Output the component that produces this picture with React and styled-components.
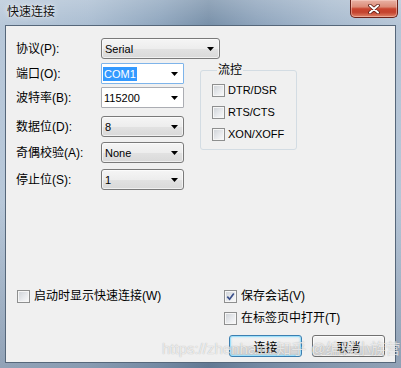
import React from "react";
import styled, { createGlobalStyle } from "styled-components";

const Global = createGlobalStyle`
  html, body { margin: 0; padding: 0; background: #fff; }
  body {
    width: 401px; height: 368px; overflow: hidden;
    font-family: "Liberation Sans", "Noto Sans CJK SC", sans-serif;
  }
  * { box-sizing: border-box; }
`;

const Window = styled.div`
  position: relative;
  width: 401px;
  height: 368px;
  display: flex;
  flex-direction: column;
  font-size: 12px;
  color: #000;
  background:
    linear-gradient(180deg, rgba(255,255,255,0.2) 0%, rgba(255,255,255,0) 7%, rgba(30,50,80,0) 55%, rgba(30,50,80,0.25) 100%),
    linear-gradient(90deg, #b8c8d9 0%, #abbed2 22%, #8fa6be 40%, #7890a9 52%, #8ea4bc 64%, #a7bace 82%, #b6c6d7 100%);
`;

const TitleBar = styled.div`
  height: 25px;
  flex: none;
  display: flex;
  align-items: flex-start;
  justify-content: space-between;
  padding-left: 7px;
`;

const Title = styled.div`
  line-height: 24px;
  font-size: 12px;
  color: #111;
  text-shadow: 0 0 6px rgba(255,255,255,0.95), 0 0 2px rgba(255,255,255,0.8);
`;

const CloseButton = styled.div`
  width: 48px;
  height: 18px;
  margin-right: 3px;
  border: 1px solid #6b2219;
  border-top: none;
  border-radius: 0 0 5px 5px;
  background: linear-gradient(180deg, #e9b2a5 0%, #dc8c78 40%, #c9452f 52%, #c4432e 72%, #e08468 100%);
  box-shadow: inset 0 0 0 1px rgba(255,220,210,0.45);
  display: flex;
  align-items: center;
  justify-content: center;
`;

const Client = styled.div`
  flex: 1;
  margin: 0 5px 5px 5px;
  background: #f0f0f0;
  border: 1px solid #56677a;
  display: flex;
  flex-direction: column;
  padding: 12px 10px 11px 10px;
`;

const Row = styled.div`
  display: flex;
  align-items: center;
  height: 21px;
  margin-top: ${(p) => p.$mt || 0}px;
`;

const Label = styled.div`
  width: 85px;
  flex: none;
  font-size: 12px;
  line-height: 14px;
`;

const Combo = styled.div`
  width: ${(p) => p.$w}px;
  height: 21px;
  display: flex;
  align-items: center;
  justify-content: space-between;
  padding: 0 5px 0 ${(p) => (p.$edit ? 1 : 2)}px;
  border: 1px solid ${(p) => (p.$focus ? "#7eb4ea" : p.$edit ? "#abadb3" : "#7a7a7a")};
  border-radius: ${(p) => (p.$edit ? 1 : 3)}px;
  background: ${(p) =>
    p.$edit
      ? "#fff"
      : "linear-gradient(180deg, #f5f5f5 0%, #ededed 50%, #e2e2e2 51%, #d9d9d9 100%)"};
  box-shadow: ${(p) => (p.$edit ? "none" : "inset 0 0 0 1px rgba(255,255,255,0.6)")};
`;

const ComboText = styled.span`
  font-size: 11px;
  line-height: 14px;
  padding: 0 1px;
  color: ${(p) => (p.$selected ? "#fff" : "#000")};
  background: ${(p) => (p.$selected ? "#3399ff" : "transparent")};
`;

const Middle = styled.div`
  display: flex;
  align-items: flex-start;
  margin-top: 4px;
`;

const Fields = styled.div`
  width: 168px;
  flex: none;
  display: flex;
  flex-direction: column;
`;

const Group = styled.fieldset`
  margin: 0 0 0 16px;
  padding: 2px 0 4px 11px;
  width: 97px;
  min-width: 0;
  border: 1px solid #d3dce3;
  border-radius: 3px;
`;

const Legend = styled.legend`
  margin-left: 5px;
  padding: 0 1px;
  font-size: 12px;
  line-height: 14px;
`;

const CheckRow = styled.label`
  display: flex;
  align-items: center;
  gap: ${(p) => (p.$tight ? 3 : 4)}px;
  height: 22px;
`;

const Box = styled.span`
  width: 13px;
  height: 13px;
  flex: none;
  border: 1px solid #8e8f8f;
  background: linear-gradient(135deg, #cdd1d6 0%, #e8eaed 55%, #fbfbfb 100%);
  box-shadow: inset 0 0 0 1px #f6f6f6;
  display: flex;
  align-items: center;
  justify-content: center;
`;

const CheckText = styled.span`
  font-size: ${(p) => (p.$latin ? 11 : 12)}px;
  line-height: 14px;
`;

const Bottom = styled.div`
  margin-top: auto;
  display: grid;
  grid-template-columns: 207px 1fr;
  grid-auto-rows: 22px;
  padding-left: 1px;
`;

const Cell = styled.div`
  grid-column: ${(p) => p.$col};
  display: flex;
  align-items: center;
`;

const Buttons = styled.div`
  grid-column: 1 / -1;
  justify-self: end;
  display: flex;
  gap: 10px;
  margin-top: 6px;
  height: 22px;
`;

const Button = styled.button`
  width: 73px;
  height: 22px;
  padding: 0;
  font-family: inherit;
  font-size: 12px;
  color: #000;
  border-radius: 3px;
  border: 1px solid ${(p) => (p.$default ? "#3c7fb1" : "#707070")};
  background: linear-gradient(180deg, #f4f4f4 0%, #ececec 50%, #dddddd 51%, #d1d1d1 100%);
  box-shadow: ${(p) =>
    p.$default
      ? "inset 0 0 0 1px #9ee0fb, inset 0 0 2px 1px rgba(72,200,250,0.45)"
      : "inset 0 0 0 1px rgba(255,255,255,0.7)"};
`;

const Watermark = styled.div`
  position: absolute;
  left: 162px;
  top: 340px;
  font-size: 15px;
  line-height: 18px;
  white-space: nowrap;
  color: rgba(255, 255, 255, 0.72);
  text-shadow: 0 0 1px rgba(80, 80, 80, 0.45);
  pointer-events: none;
`;

const Arrow = () => (
  <svg width="7" height="4" viewBox="0 0 7 4">
    <polygon points="0,0 7,0 3.5,4" fill="#000" />
  </svg>
);

const Check = ({ checked, children, latin, tight }) => (
  <CheckRow $tight={tight}>
    <Box>
      {checked && (
        <svg width="9" height="9" viewBox="0 0 9 9">
          <path d="M1.3 4.6 L3.6 7.2 L7.8 1.4" fill="none" stroke="#3a4f8a" strokeWidth="1.7" />
        </svg>
      )}
    </Box>
    <CheckText $latin={latin}>{children}</CheckText>
  </CheckRow>
);

export default function App() {
  return (
    <>
      <Global />
      <Window>
        <TitleBar>
          <Title>快速连接</Title>
          <CloseButton>
            <svg width="12" height="10" viewBox="0 0 12 10">
              <path d="M2 1.5 L10 8.5 M10 1.5 L2 8.5" stroke="#5a1a12" strokeWidth="3.6" strokeLinecap="round" />
              <path d="M2 1.5 L10 8.5 M10 1.5 L2 8.5" stroke="#fff" strokeWidth="2" strokeLinecap="round" />
            </svg>
          </CloseButton>
        </TitleBar>
        <Client>
          <Row>
            <Label>协议(P):</Label>
            <Combo $w={119}>
              <ComboText>Serial</ComboText>
              <Arrow />
            </Combo>
          </Row>
          <Middle>
            <Fields>
              <Row>
                <Label>端口(O):</Label>
                <Combo $w={83} $edit $focus>
                  <ComboText $selected>COM1</ComboText>
                  <Arrow />
                </Combo>
              </Row>
              <Row $mt={3}>
                <Label>波特率(B):</Label>
                <Combo $w={83} $edit>
                  <ComboText>115200</ComboText>
                  <Arrow />
                </Combo>
              </Row>
              <Row $mt={8}>
                <Label>数据位(D):</Label>
                <Combo $w={83}>
                  <ComboText>8</ComboText>
                  <Arrow />
                </Combo>
              </Row>
              <Row $mt={5}>
                <Label>奇偶校验(A):</Label>
                <Combo $w={83}>
                  <ComboText>None</ComboText>
                  <Arrow />
                </Combo>
              </Row>
              <Row $mt={6}>
                <Label>停止位(S):</Label>
                <Combo $w={83}>
                  <ComboText>1</ComboText>
                  <Arrow />
                </Combo>
              </Row>
            </Fields>
            <Group>
              <Legend>流控</Legend>
              <Check latin tight>DTR/DSR</Check>
              <Check latin tight>RTS/CTS</Check>
              <Check latin tight>XON/XOFF</Check>
            </Group>
          </Middle>
          <Bottom>
            <Cell $col="1">
              <Check>启动时显示快速连接(W)</Check>
            </Cell>
            <Cell $col="2">
              <Check checked>保存会话(V)</Check>
            </Cell>
            <Cell $col="2">
              <Check>在标签页中打开(T)</Check>
            </Cell>
            <Buttons>
              <Button $default>连接</Button>
              <Button>取消</Button>
            </Buttons>
          </Bottom>
        </Client>
        <Watermark>https://zhenhaim 知乎 @编程小族营</Watermark>
      </Window>
    </>
  );
}
